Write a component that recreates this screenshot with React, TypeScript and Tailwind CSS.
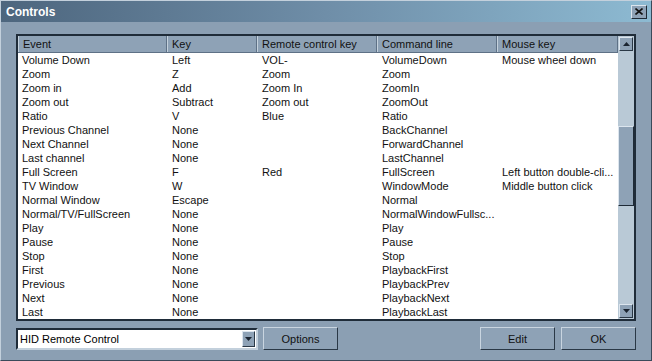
const rows: string[][] = [
  ['Volume Down', 'Left', 'VOL-', 'VolumeDown', 'Mouse wheel down'],
  ['Zoom', 'Z', 'Zoom', 'Zoom', ''],
  ['Zoom in', 'Add', 'Zoom In', 'ZoomIn', ''],
  ['Zoom out', 'Subtract', 'Zoom out', 'ZoomOut', ''],
  ['Ratio', 'V', 'Blue', 'Ratio', ''],
  ['Previous Channel', 'None', '', 'BackChannel', ''],
  ['Next Channel', 'None', '', 'ForwardChannel', ''],
  ['Last channel', 'None', '', 'LastChannel', ''],
  ['Full Screen', 'F', 'Red', 'FullScreen', 'Left button double-cli...'],
  ['TV Window', 'W', '', 'WindowMode', 'Middle button click'],
  ['Normal Window', 'Escape', '', 'Normal', ''],
  ['Normal/TV/FullScreen', 'None', '', 'NormalWindowFullsc...', ''],
  ['Play', 'None', '', 'Play', ''],
  ['Pause', 'None', '', 'Pause', ''],
  ['Stop', 'None', '', 'Stop', ''],
  ['First', 'None', '', 'PlaybackFirst', ''],
  ['Previous', 'None', '', 'PlaybackPrev', ''],
  ['Next', 'None', '', 'PlaybackNext', ''],
  ['Last', 'None', '', 'PlaybackLast', ''],
]

const headers = ['Event', 'Key', 'Remote control key', 'Command line', 'Mouse key']
const cols = 'grid grid-cols-[149px_90px_120px_120px_1fr]'

function Arrow({ up }: { up?: boolean }) {
  return (
    <div className="w-[14px] h-[14px] bg-[#8ea2b6] border border-t-[#dce5ee] border-l-[#dce5ee] border-r-[#2a3846] border-b-[#2a3846] flex items-center justify-center">
      <svg width="7" height="4" viewBox="0 0 7 4">
        {up ? <path d="M3.5 0 L7 4 L0 4 Z" fill="#1a2430" /> : <path d="M0 0 L7 0 L3.5 4 Z" fill="#1a2430" />}
      </svg>
    </div>
  )
}

function Button({ label, w }: { label: string; w: string }) {
  return (
    <div className={`${w} h-[23px] bg-[#8ea2b6] border border-t-[#c9d5e0] border-l-[#c9d5e0] border-r-[#2a3846] border-b-[#2a3846] flex items-center justify-center text-[#111]`}>
      {label}
    </div>
  )
}

export default function App() {
  return (
    <div
      className="w-[652px] h-[361px] bg-[#8b9fb3] border border-t-[#c3d0dc] border-l-[#c3d0dc] border-r-[#3a4a5a] border-b-[#3a4a5a] flex flex-col text-[11px] leading-[14px] overflow-hidden"
      style={{ fontFamily: '"Liberation Sans", Arial, sans-serif' }}
    >
      <div className="h-[21px] flex items-center justify-between pl-[5px] pr-[4px] bg-gradient-to-r from-[#4d667e] via-[#6f8ea8] to-[#8dbad2]">
        <span className="text-white font-bold text-[12px]">Controls</span>
        <div className="w-[16px] h-[14px] bg-[#8ea2b6] border border-t-[#dce5ee] border-l-[#dce5ee] border-r-[#1e2a36] border-b-[#1e2a36] flex items-center justify-center">
          <svg width="8" height="7" viewBox="0 0 8 7">
            <path d="M0.5 0.5 L7.5 6.5 M7.5 0.5 L0.5 6.5" stroke="#111" strokeWidth="1.6" />
          </svg>
        </div>
      </div>

      <div className="flex-1 flex flex-col px-[15px] pt-[12px]">
        <div className="h-[287px] border-2 border-[#1f2c39] bg-white flex">
          <div className="flex-1 flex flex-col">
            <div className={`${cols} h-[17px] bg-[#8ea2b6] border-b border-[#5e7186] text-[#111]`}>
              {headers.map((h) => (
                <div key={h} className="pl-[4px] border-r border-r-[#5e7186] border-l border-l-[#c4d1dc] flex items-center">
                  {h}
                </div>
              ))}
            </div>
            {rows.map((r, i) => (
              <div key={i} className={`${cols} h-[14px] text-[#111]`}>
                {r.map((c, j) => (
                  <div key={j} className={`${j === 0 ? 'pl-[4px]' : 'pl-[5px]'} whitespace-nowrap overflow-hidden`}>
                    {c}
                  </div>
                ))}
              </div>
            ))}
          </div>
          <div className="w-[16px] bg-[#b9c9d6] flex flex-col items-center pt-[1px] pb-[1px]">
            <Arrow up />
            <div className="flex-1 w-full flex flex-col">
              <div className="h-[75px]" />
              <div className="h-[80px] bg-[#8ea2b6] border border-t-[#dce5ee] border-l-[#dce5ee] border-r-[#1e2a36] border-b-[#1e2a36]" />
            </div>
            <Arrow />
          </div>
        </div>

        <div className="flex items-center mt-[6px]">
          <div className="w-[242px] h-[22px] bg-white border-2 border-t-[#1f2c39] border-l-[#1f2c39] border-r-[#c3d0dc] border-b-[#c3d0dc] flex items-center justify-between pl-[2px] pr-[1px]">
            <span className="text-black">HID Remote Control</span>
            <div className="w-[13px] h-[16px] bg-[#8ea2b6] border border-t-[#dce5ee] border-l-[#dce5ee] border-r-[#2a3846] border-b-[#2a3846] flex items-center justify-center">
              <svg width="7" height="4" viewBox="0 0 7 4">
                <path d="M0 0 L7 0 L3.5 4 Z" fill="#1a2430" />
              </svg>
            </div>
          </div>
          <div className="ml-[5px]">
            <Button label="Options" w="w-[75px]" />
          </div>
          <div className="flex-1" />
          <Button label="Edit" w="w-[75px]" />
          <div className="ml-[6px]">
            <Button label="OK" w="w-[75px]" />
          </div>
        </div>
      </div>
    </div>
  )
}
